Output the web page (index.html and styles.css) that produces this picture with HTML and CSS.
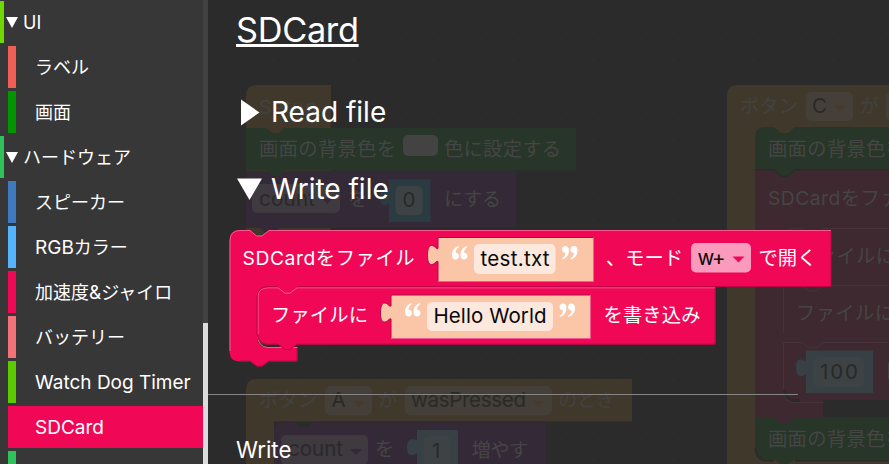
FILE: index.html
```html
<!DOCTYPE html>
<html lang="ja">
<head>
<meta charset="utf-8">
<title>SDCard</title>
<link rel="stylesheet" href="styles.css">
</head>
<body>
<div class="app">
  <nav class="sidebar">
    <ul class="tree">
      <li class="group lime"><i class="arrow"></i><span>UI</span></li>
      <li class="item coral"><span>ラベル</span></li>
      <li class="item green"><span>画面</span></li>
      <li class="group mint"><i class="arrow"></i><span>ハードウェア</span></li>
      <li class="item blue"><span>スピーカー</span></li>
      <li class="item sky"><span><b>RGB</b>カラー</span></li>
      <li class="item red"><span>加速度<b>&amp;</b>ジャイロ</span></li>
      <li class="item salmon"><span>バッテリー</span></li>
      <li class="item leaf"><span class="latin">Watch Dog Timer</span></li>
      <li class="item red selected"><span class="latin">SDCard</span></li>
      <li class="item mint"></li>
    </ul>
    <div class="scrollbar"><div class="thumb"></div></div>
  </nav>
  <main class="workspace">
    <svg class="canvas" viewBox="208 0 681 464" width="681" height="464">
      <defs>
        <pattern id="dots" x="459.5" y="85" width="26.667" height="26.667" patternUnits="userSpaceOnUse"><rect width="1.4" height="1.4" fill="#303131"/></pattern>
      </defs>
      <rect x="208" width="681" height="464" fill="url(#dots)"/>
      <!-- setup stack -->
      <path class="gold" d="M246 345V96Q246 85 257 85H331V345Z"/>
      <text x="259" y="114" textLength="58" class="dim-gold">Setup</text>
      <path class="purple" d="M246 171H516V228H285L279 228L273 234H266L260 228H246Z"/>
      <path class="green" d="M246 128H576V170.5H285L279 176H273L267 170.5H246Z"/>
      <path class="gold" d="M265 127.500H285L279 133H273Z"/>
      <text x="259" y="156" textLength="137">画面の背景色を</text>
      <rect x="403" y="135" width="35" height="21" rx="5" fill="#434343"/>
      <text x="444" y="156" textLength="117">色に設定する</text>
      <rect class="pill-purple" x="252" y="184" width="88" height="29" rx="5"/>
      <text x="259" y="206" textLength="56" class="dark">count</text>
      <path d="M322 198h11l-5.500 6Z" fill="#342936"/>
      <text x="348" y="206">を</text>
      <path class="cyan" d="M389 179.500H430.500V222H389V203C383 208 380 204 380 197S383 189 389 190Z"/>
      <rect class="pill-cyan" x="395.500" y="186" width="27" height="29" rx="5"/>
      <text x="402.500" y="207" textLength="13" class="dark">0</text>
      <text x="444" y="206" textLength="57">にする</text>
      <!-- button A stack -->
      <path class="gold" d="M246 464V390Q246 379 257 379H632V421.500H274V464Z"/>
      <text x="259" y="407" textLength="58" class="dim-gold">ボタン</text>
      <rect class="pill-gold" x="325" y="386" width="47" height="29" rx="5"/>
      <text x="331.500" y="407" textLength="14" class="dark">A</text>
      <path d="M353 401h11l-5.500 6Z" fill="#4a3a27"/>
      <text x="378" y="407" class="dim-gold">が</text>
      <rect class="pill-gold" x="405" y="386" width="147" height="29" rx="5"/>
      <text x="411" y="407" textLength="115" class="dark">wasPressed</text>
      <path d="M533 401h11l-5.500 6Z" fill="#4a3a27"/>
      <text x="558" y="407" textLength="57" class="dim-gold">のとき</text>
      <path class="purple" d="M274 464V431Q274 421.500 284 421.500H294L300 427.500H307L313 421.500H545V464Z"/>
      <rect class="pill-purple" x="281" y="435" width="87" height="30" rx="5"/>
      <text x="288" y="456" textLength="55" class="dark">count</text>
      <path d="M350 449h12l-6 6Z" fill="#332833"/>
      <text x="375" y="456">を</text>
      <path class="cyan2" d="M417 430H458V464H417V453C410 458 407 454 407 447S410 438 417 440Z"/>
      <rect class="pill-cyan" x="423.500" y="436" width="27" height="30" rx="5"/>
      <text x="432" y="457.500" class="dark">1</text>
      <text x="471.500" y="456.500" textLength="57">増やす</text>
      <!-- button C stack -->
      <path class="gold" d="M727 464V96Q727 85 738 85H889V464Z"/>
      <text x="740" y="113" textLength="58" class="dim-gold">ボタン</text>
      <rect class="pill-gold" x="806" y="92" width="47" height="29" rx="5"/>
      <text x="812" y="113" textLength="15" class="dark">C</text>
      <path d="M834 105h11l-5.500 6Z" fill="#4a3a27"/>
      <text x="860" y="113" class="dim-gold">が</text>
      <rect class="pill-gold" x="886" y="92" width="20" height="29" rx="5"/>
      <path class="maroon" d="M755 169H889V417.500H755Z"/>
      <path class="green" d="M755 170V137Q755 127 765 127H774L781 133H788L795 127H889V170H795L788 176.500H781L774 170Z"/>
      <path d="M755 169.700H774L781 176.200H788L795 169.700H889" fill="none" stroke="#272c28"/>
      <text x="768" y="156" textLength="137">画面の背景色を</text>
      <text x="768" y="205" textLength="171">SDCardをファイル</text>
      <rect x="823" y="400" width="66" height="17.500" fill="#2b2b2b"/>
      <path class="line" d="M889 228.500H823L816 234H809L802 228.500H793Q783.500 228.500 783.500 238V276Q783.500 285.500 793 285.500H802L809 291H816L823 285.500H889M783.500 276V333M889 342.500H823L816 348H809L802 342.500H783.500V392Q784 402 795 402.500H823"/>
      <path d="M784 390Q786 400 795 400.500H800" fill="none" stroke="#2b292a" stroke-width="2.500"/>
      <text x="797" y="263" textLength="98">ファイルに</text>
      <text x="796" y="320" textLength="98">ファイルに</text>
      <path class="cyan2" d="M806 350.500H873V393H806V374C799 379 796 375 796 367S799 358 806 361Z"/>
      <rect class="pill-cyan" x="813" y="357" width="51" height="30" rx="5"/>
      <text x="820" y="379" textLength="38" class="dark">100</text>
      <rect x="888" y="363" width="2" height="16" fill="#444"/>
      <path class="green" d="M755 417.500H889V459H795L788 464H781L774 459H765Q755 459 755 449Z"/>
      <path class="maroon" d="M774 417L781 423H788L795 417Z"/>
      <path d="M755.500 448Q756 460 766 460.500H774M795 460.500H889" fill="none" stroke="#2b2b29" stroke-width="2"/>
      <text x="768" y="446" textLength="137">画面の背景色を</text>
    </svg>

    <section class="flyout">
      <h1>SDCard</h1>
      <h2 class="read"><svg width="28" height="28" viewBox="0 0 28 28"><path d="M5 1.500L23.500 14.500L5 27.500Z" fill="#fff"/></svg><span>Read file</span></h2>
      <h2 class="write"><svg width="28" height="28" viewBox="0 0 28 28"><path d="M1 3.500H26L13.500 25Z" fill="#fff"/></svg><span>Write file</span></h2>
      <svg class="blocks" viewBox="228 229 604 139" width="604" height="139">
        <defs>
          <g id="quote">
            <path d="M6.500 0C2 1.500 0 5 0 9C0 12 1.500 13.500 3.500 13.500C5.600 13.500 7 12 7 10C7 8 5.700 6.700 3.600 6.800C3.600 4.500 4.700 2.500 6.900 1Z"/>
            <path transform="translate(8.500)" d="M6.500 0C2 1.500 0 5 0 9C0 12 1.500 13.500 3.500 13.500C5.600 13.500 7 12 7 10C7 8 5.700 6.700 3.600 6.800C3.600 4.500 4.700 2.500 6.900 1Z"/>
          </g>
        </defs>
        <path class="hot" d="M229.500 241Q229.500 230 240 230H250L256.500 235.500H262L269 230H831V287H297L290 293H284L277 287H268Q257.500 287 257.500 297V337Q257.500 347.500 268 347.500H297.500V361.500H269L262 366.500H257L250 361.500H240Q229.500 361.500 229.500 351Z"/>
        <path class="glow" d="M230 351V241Q230 230.500 240 230.500H250L256.500 236H262L269 230.500H831M258 337Q258.500 347 268 347.500H297.500"/>
        <path class="hot" d="M257.500 297Q257.500 287 268 287H278L285 293H290L297 287H715.500V344.500H297L290 350H285L278 344.500H268Q257.500 344.500 257.500 334Z"/>
        <path class="shade" d="M715 288V344.200H297L290 349.500H285L278 344.200H268Q259 344 257.700 335M831 231V286.600H715M297 348V361H269L262 366H257L250 361H240"/>
        <path class="glow" d="M258 334V297Q258 287.800 268 287.800H278L285 293.200H290L297 287.800H715"/>
        <path class="shade" d="M257 335V297Q257.500 286.700 268 286.700H278M297 286.700H715"/>
        <text x="242.500" y="265" textLength="172">SDCardをファイル</text>
        <path class="peach" d="M438 237.500H593.500V281.500H438V261.500C436 260.500 435 264.500 431.500 264.500C428.500 264.500 427.500 261 427.500 255.500S428.500 245.500 431.500 245.500C435 245.500 436 249.500 438 248.500Z"/>
        <path class="shade" d="M438 281V261.500C436 260.500 435 264.500 431.500 264.500C428.500 264.500 427.500 261 427.500 255.500S428.500 245.500 431.500 245.500C435 245.500 436 249.500 438 248.500V237.500H593"/>
        <path class="glow" d="M438 281.500H593.500V239"/>
        <rect class="field" x="474" y="244" width="81.500" height="30" rx="5"/>
        <use href="#quote" x="452" y="246" fill="#fff"/>
        <use href="#quote" transform="translate(577.500 259.500) rotate(180)" fill="#fff"/>
        <text x="480.500" y="266" textLength="69" class="black">test.txt</text>
        <text x="606" y="265" textLength="77">、モード</text>
        <rect x="691" y="243" width="60" height="29.500" rx="5" fill="#fa9abc"/>
        <text x="697.500" y="265" textLength="28" class="black">w+</text>
        <path d="M732.500 256.500H744.500L738.500 262.500Z" fill="#f00857"/>
        <text x="758.500" y="265" textLength="58">で開く</text>
        <text x="271" y="322" textLength="97">ファイルに</text>
        <path class="peach" d="M391 295H590.500V338.500H391V319C389 318 388 322 384.500 322C381.500 322 380.500 318.500 380.500 313S381.500 303 384.500 303C388 303 389 307 391 306Z"/>
        <path class="shade" d="M391 338V319C389 318 388 322 384.500 322C381.500 322 380.500 318.500 380.500 313S381.500 303 384.500 303C388 303 389 307 391 306V295H590"/>
        <path class="glow" d="M391 338.500H590.500V297"/>
        <rect class="field" x="427" y="302" width="126" height="29" rx="5"/>
        <use href="#quote" x="405" y="303" fill="#fff"/>
        <use href="#quote" transform="translate(575 317) rotate(180)" fill="#fff"/>
        <text x="433.500" y="323" textLength="113" class="black">Hello World</text>
        <text x="603.500" y="322" textLength="97">を書き込み</text>
      </svg>
      <hr>
      <p>Write</p>
    </section>
  </main>
</div>
</body>
</html>
```
FILE: styles.css
```css
* { box-sizing: border-box; }
body {
  margin: 0;
  width: 889px;
  height: 464px;
  overflow: hidden;
  background: #2b2b2b;
  color: #fff;
  font-family: Inter, "Noto Sans CJK JP", sans-serif;
}
.app { display: flex; height: 464px; overflow: hidden; }

.sidebar { display: flex; width: 208px; flex: none; height: 464px; background: #373737; overflow: hidden; }
.tree {
  list-style: none;
  margin: 0;
  padding: 1px 0 0;
  width: 203px;
  display: flex;
  flex-direction: column;
  gap: 3px;
  font-size: 18px;
  line-height: 42px;
  white-space: nowrap;
}
.tree li { height: 42px; flex: none; }
.tree span { display: block; padding-top: 1px; }
.tree b { font-weight: 400; font-size: 19px; line-height: 1; }
.item { margin-left: 8px; border-left: 8px solid; padding-left: 19px; }
.group { display: flex; align-items: center; gap: 5px; border-left: 4px solid; padding-left: 2px; }
.tree li { border-color: var(--c); }
.arrow { border: 6.5px solid transparent; border-top: 11px solid #fff; border-bottom: 0; }
.latin { font-size: 19px; }
.lime { --c: #6dd900; }
.coral { --c: #f05f55; }
.green { --c: #009600; }
.mint { --c: #2fc25b; }
.blue { --c: #3f7ac0; }
.sky { --c: #55b4ff; }
.red { --c: #f00857; }
.salmon { --c: #f37277; }
.leaf { --c: #5bcb00; }
.selected { background: #f00857; }
.scrollbar { width: 5px; background: #424242; padding-top: 323px; }
.thumb { height: 141px; background: #dcdcdc; }

.workspace { position: relative; width: 681px; height: 464px; overflow: hidden; }
.canvas { position: absolute; inset: 0; }
svg text { font-size: 19.3px; white-space: pre; }
.canvas text { fill: #454545; }
.canvas text.dark { fill: #292929; font-size: 20.5px; }
.canvas text.dim-gold { fill: #424241; }
.gold { fill: #40382b; }
.canvas .green { fill: #283529; }
.purple { fill: #342936; }
.maroon { fill: #3e2930; }
.cyan { fill: #2b3b42; }
.cyan2 { fill: #364045; }
.pill-purple { fill: #3f3940; }
.pill-gold { fill: #443f38; }
.pill-cyan { fill: #3d4244; }
.line { fill: none; stroke: #46323a; }

.flyout { position: relative; display: flex; flex-direction: column; height: 464px; }
.flyout > * { flex: none; }
h1 {
  margin: 8px 0 0 28px;
  font-size: 34.3px;
  font-weight: 400;
  line-height: 44px;
  letter-spacing: -0.3px;
  text-decoration: underline;
  text-decoration-thickness: 3px;
  text-underline-offset: 2px;
  text-decoration-skip-ink: none;
}
h2 {
  display: flex;
  align-items: center;
  gap: 7px;
  margin: 0 0 0 28px;
  height: 40px;
  font-size: 28px;
  font-weight: 400;
  line-height: 40px;
}
.read { margin-top: 40px; }
.write { margin-top: 37px; }
.blocks { margin: 20px 0 0 20px; display: block; }
.blocks text { fill: #fff; }
.blocks text.black { fill: #080808; font-size: 20.5px; }
.hot { fill: #f00857; }
.glow { fill: none; stroke: #f65a90; }
.shade { fill: none; stroke: #b50745; }
.peach { fill: #fbc5a8; }
.field { fill: #fce8dd; }
hr { width: 590px; height: 1px; margin: 26px 0 0; border: 0; background: #858585; }
p { margin: 40px 0 0 28px; font-size: 22.3px; line-height: 30px; }
```
